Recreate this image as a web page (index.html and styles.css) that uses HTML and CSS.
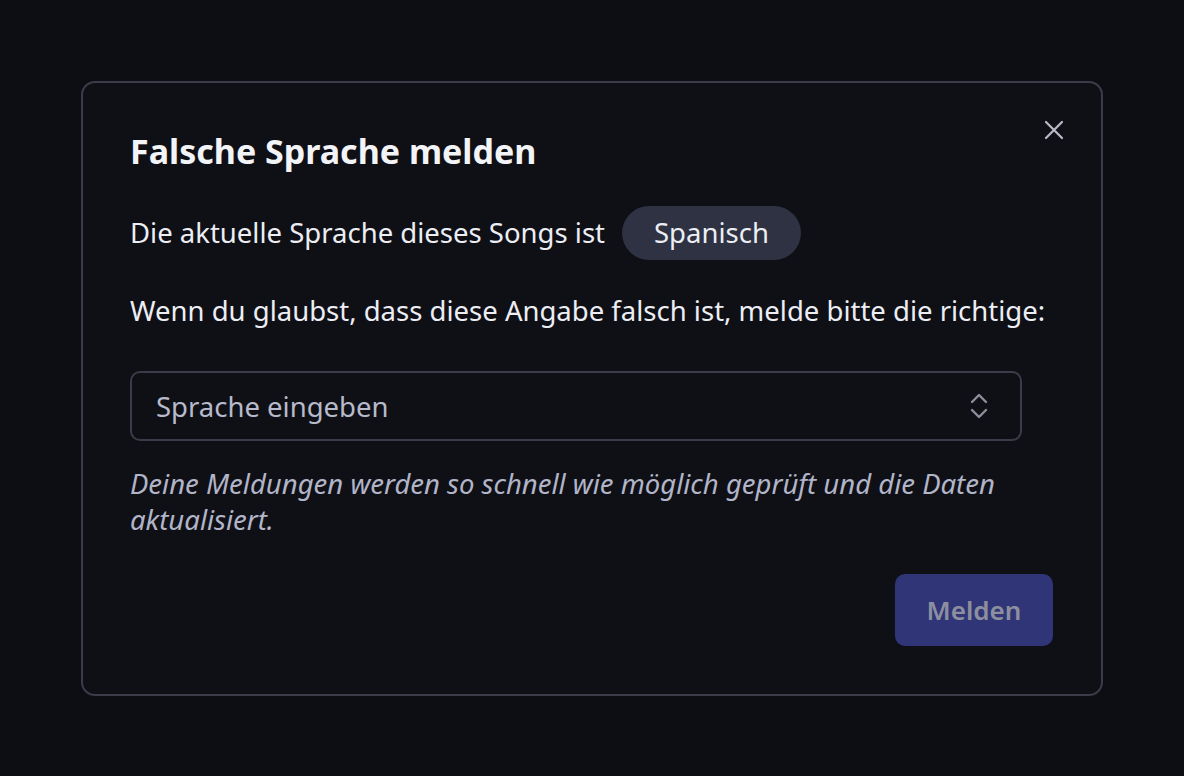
FILE: index.html
```html
<!DOCTYPE html>
<html lang="de">
<head>
    <meta charset="UTF-8">
    <meta name="viewport" content="width=device-width, initial-scale=1.0">
    <title>Falsche Sprache melden</title>
    <link rel="stylesheet" href="styles.css">
</head>
<body>
    <div class="modal">
        <button class="close" aria-label="Schließen">
            <svg width="22" height="22" viewBox="0 0 22 22" fill="none" stroke="currentColor" stroke-width="2.2" stroke-linecap="round">
                <path d="M3 3 L19 19 M19 3 L3 19"/>
            </svg>
        </button>
        <h2>Falsche Sprache melden</h2>
        <p class="current">Die aktuelle Sprache dieses Songs ist <span class="pill">Spanisch</span></p>
        <p class="ask">Wenn du glaubst, dass diese Angabe falsch ist, melde bitte die richtige:</p>
        <div class="select">
            <span class="placeholder">Sprache eingeben</span>
            <svg width="22" height="30" viewBox="0 0 22 30" fill="none" stroke="currentColor" stroke-width="2.4" stroke-linecap="round" stroke-linejoin="round">
                <path d="M4 11 L11 4 L18 11"/>
                <path d="M4 19 L11 26 L18 19"/>
            </svg>
        </div>
        <p class="note">Deine Meldungen werden so schnell wie möglich geprüft und die Daten aktualisiert.</p>
        <div class="actions">
            <button class="submit" disabled>Melden</button>
        </div>
    </div>
</body>
</html>
```

FILE: styles.css
```css
body {
    margin: 0;
    padding: 81px;
    background: #0d0e13;
    font-family: "Noto Sans", Arial, sans-serif;
    color: #eceef4;
}
.modal {
    position: relative;
    background: #0f1016;
    border: 2px solid #3a3c49;
    border-radius: 14px;
    padding: 48px 48px 48px 47px;
}
.close {
    position: absolute;
    top: 36px;
    right: 36px;
    background: none;
    border: none;
    padding: 0;
    color: #b9bcc8;
    cursor: pointer;
}
h2 {
    margin: 0;
    font-size: 34px;
    font-weight: 700;
    color: #f3f4f8;
    line-height: 40px;
}
.current {
    margin: 35px 0 0 0;
    font-size: 27.5px;
    line-height: 54px;
    display: flex;
    align-items: center;
    gap: 17px;
}
.pill {
    background: #2e3242;
    border-radius: 27px;
    padding: 0 32px;
    height: 54px;
    line-height: 54px;
}
.ask {
    margin: 33px 0 0 0;
    font-size: 27.5px;
    line-height: 36px;
}
.select {
    margin-top: 42px;
    height: 66px;
    width: 834px;
    border: 2px solid #3a3c49;
    border-radius: 10px;
    display: flex;
    align-items: center;
    justify-content: space-between;
    padding: 0 30px 0 24px;
    color: #a7aabb;
}
.placeholder {
    font-size: 27.5px;
    color: #b7bacb;
}
.select svg {
    color: #8c8f9c;
}
.note {
    margin: 25px 0 0 0;
    font-size: 27.5px;
    line-height: 36px;
    font-style: italic;
    color: #b2b5c8;
}
.actions {
    display: flex;
    justify-content: flex-end;
    margin-top: 36px;
}
.submit {
    background: #2f3577;
    color: #8d8f9f;
    border: none;
    border-radius: 10px;
    width: 158px;
    height: 72px;
    font-family: inherit;
    font-size: 26px;
    font-weight: 600;
    cursor: not-allowed;
}
```
